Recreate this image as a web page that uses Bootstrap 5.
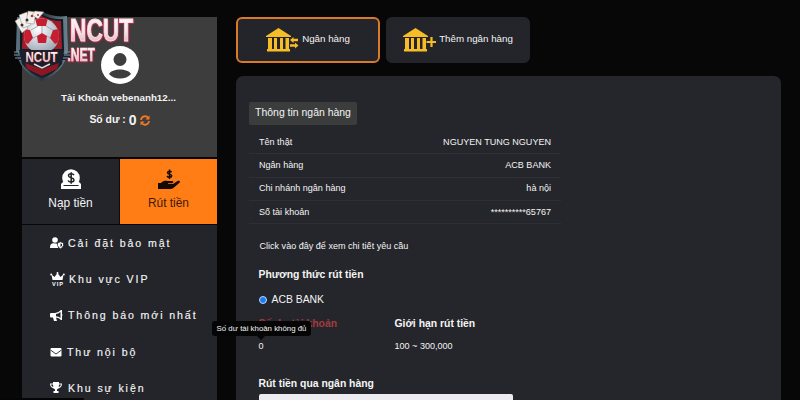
<!DOCTYPE html>
<html lang="vi">
<head>
<meta charset="utf-8">
<meta name="viewport" content="width=device-width, initial-scale=1">
<title>Rút tiền</title>
<link href="https://cdn.jsdelivr.net/npm/bootstrap@5.3.0/dist/css/bootstrap.min.css" rel="stylesheet">
<style>
body{font-family:"Liberation Sans",Arial,sans-serif;background:#070707;color:#f4f4f4;height:400px;font-size:9.05px;line-height:1}
.side{width:195px;margin:17px 0 0 22px}
.account{height:140px;background:#3d3d3d;padding-top:29px}
.who{font-size:9.8px;margin-top:8px;line-height:12px;padding-right:2px}
.money{font-size:10.4px;margin-top:8px;line-height:16px}
.money b{font-size:14px}
.money b,.money svg{margin-left:3px}
.tabs{height:65px;margin-top:2px}
.tab-item{background:#23252a;font-size:11.9px;padding-top:10px;color:#f4f4f4}
.tab-item.deposit{width:98px;border-right:1px solid #0b0b0b}
.tab-item.on{background:#ff7d14;color:#3c1b08}
.tab-item span{line-height:14px;margin-top:6px}
.side-menu{background:#23252a;height:175px;margin-top:1px}
.side-menu a{height:36.3px;padding-left:28px;font-size:10.6px;letter-spacing:1.9px;color:#f4f4f4;text-decoration:none;-webkit-text-stroke:.15px #f4f4f4}
.side-menu svg{margin-right:4px}
.main{margin:17px 0 0 19px;width:545px}
.bank{width:144px;height:46px;border-radius:6px;background:#23252a;border:2px solid #23252a;font-size:9.75px;gap:3px;color:#f4f4f4;padding:0}
.bank span{padding-bottom:2px}
.bank.on{border-color:#d97a26}
.panel{margin-top:13px;background:#25262b;border-radius:7px;height:330px;padding:26px 13px 0 13px}
.tag{background:#3b3d3c;border-radius:2px;height:23px;width:108px;font-size:10.45px}
.info{width:312px;margin-top:6px}
.info div{height:23.3px;padding:0 10px;border-bottom:1px solid #2e2f34}
.form-area{padding-left:9.5px}
.hint{margin-top:16px;line-height:12px;padding-left:1px}
.ttl{font-weight:700;font-size:10.4px;line-height:14px}
.dot{width:8px;height:8px;border-radius:50%;background:#1c7cf0;border:1px solid #b6d7fb}
.field{background:#ececf0;width:254px;height:20px;border-radius:2px;margin-top:3px}
.logo{left:10px;top:6px}
.tip{left:212px;top:321px;width:99px;height:15px;background:#050505;border-radius:3px;font-size:7.85px;z-index:3}
.tip::after{content:"";position:absolute;left:45px;top:15px;border:4px solid transparent;border-top-color:#050505;border-bottom:0}
.shelf{left:0;top:398px;width:84px;height:2px;background:#050505}
</style>
</head>
<body class="overflow-hidden position-relative">
<svg width="0" height="0" class="position-absolute"><defs>
<g id="bankShape" fill="#f7bd27"><path d="M0 8 12.5 0 25 8v1H0zM2 10h4v11H2zM8 10h3v11H8zM14 10h3v11h-3zM19.500 10h3.500v11h-3.500zM1 21h23v2.500H1z"/></g>
</defs></svg>
<div class="d-flex">
<aside class="side flex-shrink-0">
<div class="account d-flex flex-column align-items-center">
<svg width="38" height="38" viewBox="0 0 38 38"><circle cx="19" cy="19" r="19" fill="#fff"/><circle cx="19" cy="13.500" r="6.500" fill="#3d3d3d"/><path d="M8 28c3-6 19-6 22 0-5 6-17 6-22 0z" fill="#3d3d3d"/></svg>
<div class="who fw-bold">Tài Khoản vebenanh12...</div>
<div class="money fw-bold d-flex align-items-center"><span>Số dư :</span><b>0</b>
<svg width="10" height="11" viewBox="0 0 10 11" fill="none" stroke="#ed7b22" stroke-width="1.800"><path d="M1 5C1.500 1 6 0 8.500 3M9 6C8.500 10 4 11 1.500 8"/><path d="M9.500.5v4h-4zM.5 10.500v-4h4z" fill="#ed7b22" stroke="none"/></svg></div>
</div>
<div class="tabs d-flex gap-0">
<div class="tab-item deposit d-flex flex-column align-items-center"><svg width="20" height="21" viewBox="0 0 20 21"><path d="M2 13h16l2 2v5H0v-5z" fill="#fff"/><circle cx="10" cy="9" r="8.800" fill="#fff"/><path d="M2.500 16.500h15" stroke="#23252a"/><path d="M13 6.200C12 4.300 7.500 4.300 7.500 6.700S13 8.500 13 11 8.200 13.600 7 11.500M10.200 3.200v11.500" fill="none" stroke="#23252a" stroke-width="1.500"/></svg><span>Nạp tiền</span></div>
<div class="tab-item on flex-fill d-flex flex-column align-items-center"><svg width="22" height="21" viewBox="0 0 22 21"><path d="M13.500 3.300C12.700 1.800 9.500 1.900 9.500 3.700S13.700 4.700 13.700 6.700 10 8.700 9 7M11.500.5v9.500" fill="none" stroke="#160a04" stroke-width="1.500"/><path d="M0 14h3c3-3 5-2 7-2h4c2 0 1.500 2.200 0 2.200h-4v.8h5l4.500-3c1.500-1 3.300.3 2 1.700L16 18.500Q14.500 20 12 20H0z" fill="#160a04"/></svg><span>Rút tiền</span></div>
</div>
<nav class="side-menu overflow-hidden">
<a class="d-flex align-items-center" href="#"><svg width="14" height="12" viewBox="0 0 14 12" fill="#fff"><circle cx="5" cy="3" r="2.800"/><path d="M0 11c0-6 4-5 8-4v4z"/><path d="M10.500 4.800 13.500 6v2.500q-.8 2.300-3 3.300-2.200-1-3-3.300V6z" stroke="#23252a" stroke-width=".7"/><path d="M10.500 6.500v3.700l1.500-1.700V7z" fill="#23252a"/></svg>Cải đặt bảo mật</a>
<a class="d-flex align-items-center" href="#"><svg width="15" height="14" viewBox="0 0 15 14" fill="#fff"><path d="M1.500 2.500 4.500 5 7.500 1l3 4 3-2.500L12.500 8h-10z"/><circle cx="1.200" cy="2.500" r="1"/><circle cx="7.500" cy="1" r="1"/><circle cx="13.800" cy="2.500" r="1"/><text x="2" y="13.500" font-size="5.600" font-weight="700" letter-spacing="0" textLength="11">VIP</text></svg>Khu vực VIP</a>
<a class="d-flex align-items-center" href="#"><svg width="14" height="12" viewBox="0 0 14 12" fill="#fff"><path d="M0 4q0-1 1-1h4q3 0 6-3h1v4q1 .8 0 2v4h-1Q9 7.500 6 7.500L7 11H4L3 7.500H1q-1 0-1-1zM10.500 2Q8 4 6 4v2.300q2.500 0 4.500 1.700z" fill-rule="evenodd"/></svg>Thông báo mới nhất</a>
<a class="d-flex align-items-center" href="#"><svg width="13" height="10" viewBox="0 0 13 10"><rect x=".5" y="1" width="11" height="8.500" rx="1" fill="#fff"/><path d="m.5 3 5.500 4 5.500-4" fill="none" stroke="#23252a" stroke-width=".9"/></svg>Thư nội bộ</a>
<a class="d-flex align-items-center" href="#"><svg width="14" height="12" viewBox="0 0 14 12" fill="#fff"><path d="M3 0h6v1.500h3q0 4-3.700 5L7 7.500V9h1.500v2h-5V9H5V7.500L3.700 6.500Q0 5.500 0 1.500h3zM1 2.500Q1.300 4.500 3.300 5L3 2.500zM11 2.500H9L8.700 5q2-.5 2.300-2.500z" fill-rule="evenodd"/></svg>Khu sự kiện</a>
</nav>
</aside>
<main class="main flex-shrink-0">
<div class="d-flex" style="gap:6px">
<button class="bank on btn d-flex align-items-center justify-content-center"><svg width="33" height="24" viewBox="0 0 33 24"><use href="#bankShape"/><path d="m24 12 3.500-3v1.800H32v2.400h-4.500V15zM32.500 17.500 29 14.500v1.800h-5v2.400h5v1.800z" fill="#f7bd27"/></svg><span>Ngân hàng</span></button>
<button class="bank btn d-flex align-items-center justify-content-center"><svg width="33" height="24" viewBox="0 0 33 24"><use href="#bankShape"/><path d="M28.500 9v10M23.500 14h9.500" stroke="#f7bd27" stroke-width="2.200"/></svg><span>Thêm ngân hàng</span></button>
</div>
<section class="panel">
<div class="tag d-flex align-items-center justify-content-center">Thông tin ngân hàng</div>
<div class="info">
<div class="d-flex align-items-center justify-content-between"><span>Tên thật</span><span>NGUYEN TUNG NGUYEN</span></div>
<div class="d-flex align-items-center justify-content-between"><span>Ngân hàng</span><span>ACB BANK</span></div>
<div class="d-flex align-items-center justify-content-between"><span>Chi nhánh ngân hàng</span><span>hà nội</span></div>
<div class="d-flex align-items-center justify-content-between"><span>Số tài khoản</span><span>**********65767</span></div>
</div>
<div class="form-area">
<div class="hint">Click vào đây để xem chi tiết yêu cầu</div>
<div class="ttl" style="margin-top:16px">Phương thức rút tiền</div>
<div class="d-flex align-items-center" style="margin-top:11px;height:14px;font-size:10.400px"><span class="dot"></span><span style="margin-left:5px">ACB BANK</span></div>
<div class="d-flex" style="margin-top:10px"><div style="width:136px"><div class="ttl" style="color:#a23a40">Số dư tài khoản</div><div style="margin-top:10px;line-height:10px">0</div></div><div><div class="ttl">Giới hạn rút tiền</div><div style="margin-top:10px;line-height:10px">100 ~ 300,000</div></div></div>
<div class="ttl" style="margin-top:26px">Rút tiền qua ngân hàng</div>
<div class="field"></div>
</div>
</section>
</main>
</div>
<svg class="logo position-absolute overflow-visible" width="130" height="80" viewBox="10 6 130 80">
<defs><linearGradient id="lt" x1="0" y1="0" x2="0" y2="1"><stop offset="0" stop-color="#fff"/><stop offset=".55" stop-color="#f4e4e8"/><stop offset="1" stop-color="#d9a0ae"/></linearGradient>
<linearGradient id="rim"><stop offset="0" stop-color="#5d7683"/><stop offset=".5" stop-color="#26343f"/><stop offset="1" stop-color="#6d8490"/></linearGradient>
<radialGradient id="ball" cx=".4" cy=".3" r=".8"><stop offset="0" stop-color="#fff"/><stop offset="1" stop-color="#8e9cab"/></radialGradient><clipPath id="bc"><circle cx="41.500" cy="36" r="17.500"/></clipPath></defs>
<path d="M17 17Q30 18 41 11q12 7 26 5 0 12 1 34-3 22-26 31-23-9-26-31z" fill="url(#rim)"/>
<path d="M20 20q11 0 21-6 10 6 22 5l1 31q-3 18-22 27-19-9-22-27z" fill="#111b25"/>
<path d="M23 22q9-1 18-6 10 5 20 5l1 28H22z" fill="#9f1d28"/>
<circle cx="41.500" cy="36" r="17.500" fill="url(#ball)"/>
<g clip-path="url(#bc)" fill="#c71f32"><path d="m37 36 5-3 5 3-1 7h-8zM35 18h13l-2 8h-9zM24 29l6 1 3 8-5 6-4-2zM59 29l-6 1-3 8 5 6 4-2z"/><path d="M38 26l-7 4M46 26l7 4M33 38l4-2M50 38l-3-2M42 26v7" stroke="#8e9cab" stroke-width=".8"/></g>
<path d="M19 50h45l-2 14q-9 11-20 14-11-3-20-14z" fill="#17202b"/>
<path d="m14 53 4-1v2h50l2-2v5l-4 3H19z" fill="#18212b"/>
<path d="M14 52h5M14 55h6M15 58h6M65 52h5M64 55h6M63 58h6" stroke="#8097a5"/>
<path d="m25 63 17 6 17-6-2 6-15 7-15-7z" fill="#8a1722"/><path d="m34 64 8 4 8-4" stroke="#e7dce0" stroke-width="1.500" fill="none"/>
<g fill="#f3f0ec" stroke="#8b8581" stroke-width=".5"><path d="m15 21 6-4 7 11-6 5z"/><path d="m19 15 8-3 4 13-8 3z"/><path d="m28 11 8 1-2 12-8-1z"/><path d="m35 11 9 1-6 7-6-4z"/></g>
<g fill="#343036"><circle cx="22" cy="25" r="1.500"/><circle cx="27" cy="20" r="1.500"/></g><circle cx="32" cy="16" r="1.300" fill="#bd3038"/><circle cx="38" cy="15" r="1" fill="#bd3038"/>
<g font-family="Liberation Sans,Arial,sans-serif" font-weight="700" fill="url(#lt)">
<g stroke="#a52b47" stroke-linejoin="round" paint-order="stroke"><text x="25.500" y="61.500" font-size="15" textLength="32" lengthAdjust="spacingAndGlyphs" stroke="#581821" stroke-width="1.500">NCUT</text></g>
<g style="filter:drop-shadow(1px 1px 0 #a52b47) drop-shadow(-.5px 0 0 #a52b47)" stroke="#f4dfe5" stroke-width="1"><text x="70" y="41" font-size="32" textLength="63" lengthAdjust="spacingAndGlyphs">NCUT</text>
<text x="67.500" y="60.500" font-size="19" textLength="27.500" lengthAdjust="spacingAndGlyphs" stroke-width=".6">.NET</text></g></g>
</svg>
<div class="tip position-absolute d-flex align-items-center justify-content-center text-nowrap">Số dư tài khoản không đủ</div>
<div class="shelf position-absolute"></div>
<script src="https://cdn.jsdelivr.net/npm/bootstrap@5.3.0/dist/js/bootstrap.bundle.min.js"></script>
</body>
</html>
